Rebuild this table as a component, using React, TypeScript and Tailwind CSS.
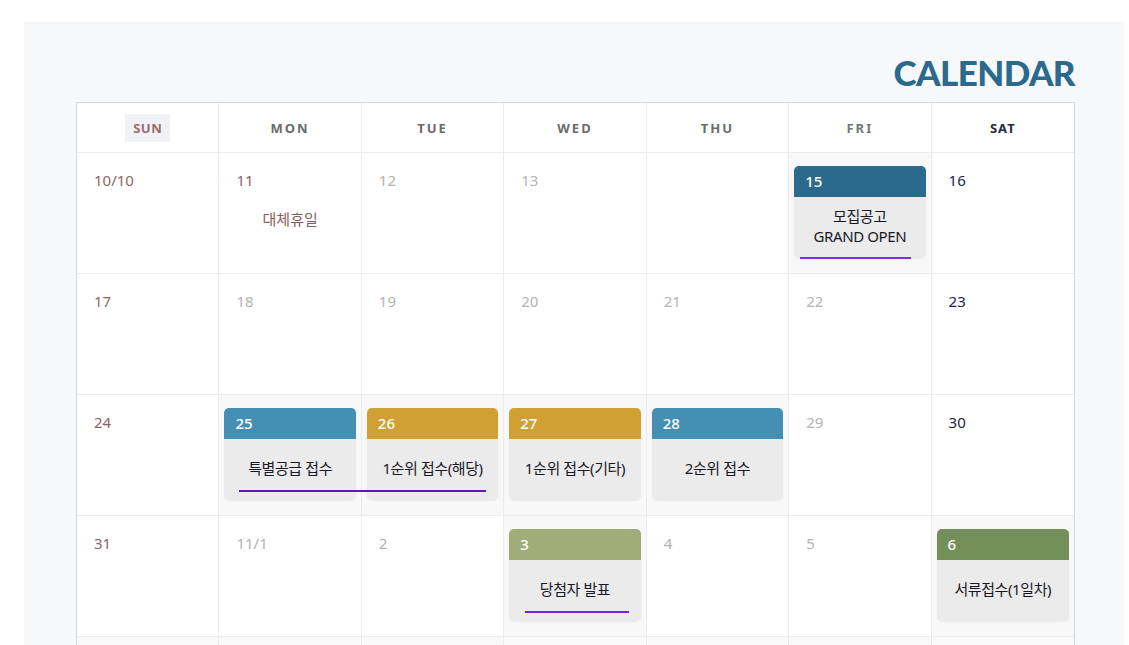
type EventInfo = {
  color: string;
  lines: string[];
};

type Day = {
  label: string;
  tone: "sun" | "holiday" | "week" | "sat";
  event?: EventInfo;
  note?: string;
  underline?: string;
};

const HEADERS = [
  { label: "SUN", cls: "text-[#9a6b6f] tracking-[0.5px] bg-[#f1f2f5] px-[8px] py-[4px]" },
  { label: "MON", cls: "text-[#6b6b6b] tracking-[2px]" },
  { label: "TUE", cls: "text-[#6b6b6b] tracking-[2px]" },
  { label: "WED", cls: "text-[#6b6b6b] tracking-[2px]" },
  { label: "THU", cls: "text-[#6b6b6b] tracking-[2px]" },
  { label: "FRI", cls: "text-[#777777] tracking-[2px]" },
  { label: "SAT", cls: "text-[#1f2d3d] tracking-[1px]" },
];

const TONE: Record<Day["tone"], string> = {
  sun: "text-[#8f6468]",
  holiday: "text-[#8f6468]",
  week: "text-[#b3b3b3]",
  sat: "text-[#1c2541]",
};

const WEEKS: Day[][] = [
  [
    { label: "10/10", tone: "sun" },
    { label: "11", tone: "holiday", note: "대체휴일" },
    { label: "12", tone: "week" },
    { label: "13", tone: "week" },
    { label: "", tone: "week" },
    {
      label: "15",
      tone: "week",
      event: { color: "bg-[#2b6a8c]", lines: ["모집공고", "GRAND OPEN"] },
      underline: "left-[11px] w-[111px] top-[104px] bg-[#8a2be2]",
    },
    { label: "16", tone: "sat" },
  ],
  [
    { label: "17", tone: "sun" },
    { label: "18", tone: "week" },
    { label: "19", tone: "week" },
    { label: "20", tone: "week" },
    { label: "21", tone: "week" },
    { label: "22", tone: "week" },
    { label: "23", tone: "sat" },
  ],
  [
    { label: "24", tone: "sun" },
    {
      label: "25",
      tone: "week",
      event: { color: "bg-[#458fb5]", lines: ["특별공급 접수"] },
      underline: "left-[20px] w-[247px] top-[95px] bg-[#5f1aa8]",
    },
    { label: "26", tone: "week", event: { color: "bg-[#d0a034]", lines: ["1순위 접수(해당)"] } },
    { label: "27", tone: "week", event: { color: "bg-[#d0a034]", lines: ["1순위 접수(기타)"] } },
    { label: "28", tone: "week", event: { color: "bg-[#458fb5]", lines: ["2순위 접수"] } },
    { label: "29", tone: "week" },
    { label: "30", tone: "sat" },
  ],
  [
    { label: "31", tone: "sun" },
    { label: "11/1", tone: "week" },
    { label: "2", tone: "week" },
    {
      label: "3",
      tone: "week",
      event: { color: "bg-[#a0ad78]", lines: ["당첨자 발표"] },
      underline: "left-[21px] w-[104px] top-[95px] bg-[#7a22d6]",
    },
    { label: "4", tone: "week" },
    { label: "5", tone: "week" },
    { label: "6", tone: "sat", event: { color: "bg-[#758f5a]", lines: ["서류접수(1일차)"] } },
  ],
];

function DayCell({ day, last }: { day: Day; last: boolean }) {
  const edge = last ? "" : "border-r border-[#ececec]";
  return (
    <div
      className={`relative h-[121px] border-b border-[#ececec] ${edge} ${
        day.event ? "bg-[#f8f8f8]" : "bg-white"
      }`}
    >
      {day.event ? (
        <div className="mx-[5px] mt-[13px] h-[92px] rounded-[5px] bg-[#ebebeb] shadow-[0_1px_2px_rgba(0,0,0,0.06)] overflow-hidden flex flex-col">
          <div className={`h-[31px] ${day.event.color} px-[11px] flex items-center text-[15px] font-medium text-white`}>
            {day.label}
          </div>
          <div className="flex-1 flex flex-col items-center justify-center pb-[3px] text-[15px] leading-[20px] text-[#191926] tracking-[-0.4px]">
            {day.event.lines.map((l) => (
              <span key={l}>{l}</span>
            ))}
          </div>
        </div>
      ) : (
        <div className={`pl-[17px] pt-[17px] text-[15px] leading-[20px] ${TONE[day.tone]}`}>{day.label}</div>
      )}
      {day.note && (
        <div className="mt-[19px] text-center text-[15px] leading-[20px] text-[#8b5a5e]">{day.note}</div>
      )}
      {day.underline && <div className={`absolute z-10 h-[2px] ${day.underline}`} />}
    </div>
  );
}

export default function App() {
  return (
    <div
      className="h-[645px] overflow-hidden bg-white pt-[22px] pl-[24px] pr-[5px]"
      style={{ fontFamily: '"Noto Sans", "Noto Sans CJK KR", sans-serif' }}
    >
      <div className="h-[640px] bg-[#f7f8fa] pl-[52px] pr-[49px]">
        <div className="h-[80px] flex items-end justify-end pb-[12px]">
          <h1
            className="text-[35px] leading-none font-black text-[#2b6a8c] tracking-[-0.6px]"
            style={{ fontFamily: 'Lato, sans-serif' }}
          >
            CALENDAR
          </h1>
        </div>
        <div className="border border-[#d6d6dc] border-b-0 bg-white">
          <div className="grid grid-cols-7">
            {HEADERS.map((h, i) => (
              <div
                key={h.label}
                className={`h-[50px] border-b border-[#ececec] flex items-center justify-center ${
                  i < 6 ? "border-r" : ""
                }`}
              >
                <span className={`text-[13px] leading-[20px] font-bold ${h.cls}`}>{h.label}</span>
              </div>
            ))}
          </div>
          {WEEKS.map((week, wi) => (
            <div key={wi} className="grid grid-cols-7">
              {week.map((d, di) => (
                <DayCell key={di} day={d} last={di === 6} />
              ))}
            </div>
          ))}
          <div className="grid grid-cols-7">
            {Array.from({ length: 7 }).map((_, i) => (
              <div key={i} className={`h-[121px] bg-[#f9f9f9] ${i < 6 ? "border-r border-[#ececec]" : ""}`} />
            ))}
          </div>
        </div>
      </div>
    </div>
  );
}
